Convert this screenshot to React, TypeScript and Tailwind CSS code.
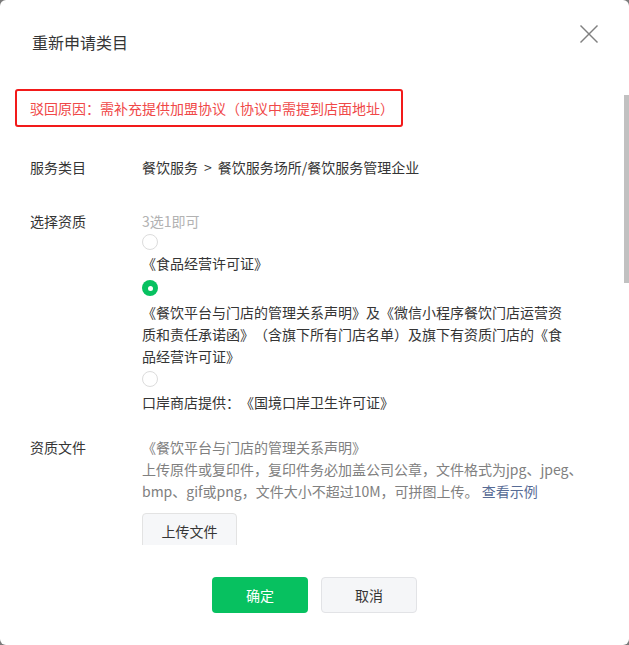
import React from "react";

function Radio({ checked }: { checked?: boolean }) {
  if (checked) {
    return (
      <div className="w-4 h-4 rounded-full bg-[#07c160] flex items-center justify-center">
        <div className="w-[5px] h-[5px] rounded-full bg-white" />
      </div>
    );
  }
  return <div className="w-4 h-4 rounded-full border border-[#dcdcdc] bg-white" />;
}

export default function App() {
  return (
    <div
      className="w-[629px] h-[645px] bg-[#7a7a7a] overflow-hidden [text-spacing-trim:space-all]"
      style={{ fontFamily: '"Noto Sans CJK SC", "Noto Sans", sans-serif' }}
    >
      <div className="relative w-full h-full bg-white rounded-[6px] flex flex-col text-[14px] text-[#353535]">
        {/* header */}
        <div className="h-[75px] flex-none flex justify-between items-start">
          <div className="ml-[32px] mt-[30px] text-[16px] leading-[24px] text-[#353535]">重新申请类目</div>
          <svg className="mt-[25px] mr-[31px]" width="18" height="18" viewBox="0 0 18 18">
            <line x1="0.5" y1="0.5" x2="17.5" y2="17.5" stroke="#808080" strokeWidth="1.4" />
            <line x1="17.5" y1="0.5" x2="0.5" y2="17.5" stroke="#808080" strokeWidth="1.4" />
          </svg>
        </div>

        {/* body */}
        <div className="h-[470px] flex-none overflow-hidden">
          <div className="mt-[14px] ml-[15px] w-[388px] h-[38px] border-2 border-[#f21a1a] rounded-[3px] flex items-center pl-[13px] text-[#f04848] leading-[22px]">
            驳回原因：需补充提供加盟协议（协议中需提到店面地址）
          </div>

          <div className="mt-[29px] flex leading-[22px]">
            <div className="w-[142px] pl-[30px] flex-none">服务类目</div>
            <div>
              餐饮服务<span className="mx-[6px]">&gt;</span>餐饮服务场所/餐饮服务管理企业
            </div>
          </div>

          <div className="mt-[32px] flex leading-[22px]">
            <div className="w-[142px] pl-[30px] flex-none">选择资质</div>
            <div className="flex flex-col">
              <div className="text-[#b2b2b2]">3选1即可</div>
              <div className="mt-[2px]">
                <Radio />
              </div>
              <div className="mt-[2px]">《食品经营许可证》</div>
              <div className="mt-[6px]">
                <Radio checked />
              </div>
              <div className="mt-[5px] w-[425px]">
                《餐饮平台与门店的管理关系声明》及《微信小程序餐饮门店运营资质和责任承诺函》（含旗下所有门店名单）及旗下有资质门店的《食品经营许可证》
              </div>
              <div className="mt-[4px]">
                <Radio />
              </div>
              <div className="mt-[4px]">口岸商店提供：《国境口岸卫生许可证》</div>
            </div>
          </div>

          <div className="mt-[23px] flex leading-[22px]">
            <div className="w-[142px] pl-[30px] flex-none">资质文件</div>
            <div className="flex flex-col">
              <div className="text-[#808080]">《餐饮平台与门店的管理关系声明》</div>
              <div className="text-[#808080] w-[448px]">
                上传原件或复印件，复印件务必加盖公司公章，文件格式为jpg、jpeg、bmp、gif或png，文件大小不超过10M，可拼图上传。
                <span className="text-[#576b95]"> 查看示例</span>
              </div>
              <div className="mt-[11px] w-[95px] h-[36px] border border-[#e3e3e3] bg-[#f6f7f9] rounded-[4px] flex items-center justify-center text-[#353535]">
                上传文件
              </div>
            </div>
          </div>
        </div>

        {/* footer */}
        <div className="flex-1 flex justify-center items-start pt-[32px] gap-[13px]">
          <div className="w-[96px] h-[36px] rounded-[4px] bg-[#07c160] text-white flex items-center justify-center">
            确定
          </div>
          <div className="w-[96px] h-[36px] rounded-[4px] bg-[#f5f6f8] border border-[#e2e3e6] text-[#353535] flex items-center justify-center">
            取消
          </div>
        </div>

        {/* scrollbar thumb */}
        <div className="absolute right-0 top-[95px] w-[5px] h-[188px] bg-[#c1c1c1]" />
      </div>
    </div>
  );
}
